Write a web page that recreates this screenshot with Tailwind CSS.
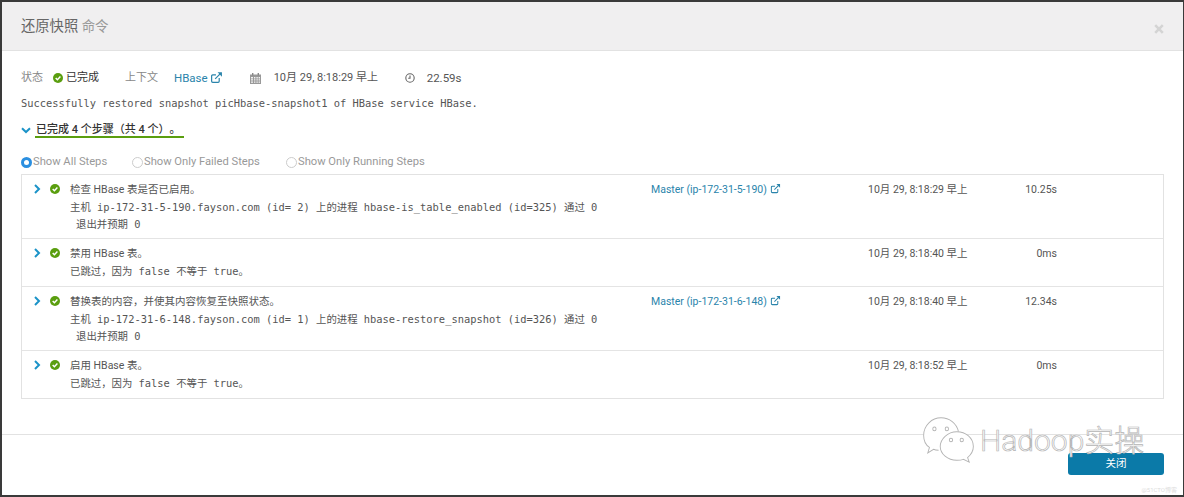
<!DOCTYPE html>
<html lang="zh">
<head>
<meta charset="utf-8">
<script src="https://cdn.jsdelivr.net/npm/@tailwindcss/browser@4"></script>
</head>
<body class="m-0 bg-[#3a3a3a]">
<div class="w-[1184px] h-[497px] overflow-hidden pt-[2px] pl-[2px] pr-px pb-[2px] font-['Roboto','Noto_Sans_CJK_SC',sans-serif] text-[#555]">
  <div class="relative flex flex-col h-full bg-white rounded-tl-[3px]">
    <header class="h-[49px] shrink-0 flex items-center justify-between bg-[#f0eff0] border-b border-[#e2e2e2] pl-[19px] pr-[19px]">
      <h1 class="text-[14.3px] leading-[20px] text-[#666] font-normal">还原快照 <span class="text-[13.4px] text-[#999]">命令</span></h1>
      <span class="text-[#d4d4d4]"><svg width="10" height="10" viewBox="0 0 10 10" class="block mt-[5px]"><path d="M1.2 1.2 8.8 8.8M8.8 1.2 1.2 8.8" stroke="currentColor" stroke-width="2.6"/></svg></span>
    </header>

    <main class="flex-1 pl-[19px] pr-[19px] flex flex-col">
      <div class="flex items-center h-[18px] mt-[18px] text-[11px] leading-[18px] whitespace-nowrap">
        <span class="w-[32px] text-[#888]">状态</span>
        <svg width="10" height="10" viewBox="0 0 10 10" class="shrink-0 mr-[3px]"><circle cx="5" cy="5" r="5" fill="#5a9e0f"/><path d="M2.7 5 4.4 6.7 7.4 3.6" fill="none" stroke="#fff" stroke-width="1.5"/></svg>
        <span class="w-[59px] text-[#333]">已完成</span>
        <span class="w-[49px] text-[#888]">上下文</span>
        <span class="text-[#2a84ab] text-[11.5px]">HBase</span>
        <svg width="13" height="13" viewBox="0 0 12 12" class="shrink-0 ml-[2px] mb-[2px]" fill="none" stroke="#2a84ab" stroke-width="1.1"><path d="M8.5 6.5v3a1 1 0 0 1-1 1h-5a1 1 0 0 1-1-1v-5a1 1 0 0 1 1-1h3"/><path d="M4.8 7.2 10 2"/><path d="M7 1.2h4v4" fill="#2a84ab" stroke="none"/></svg>
        <svg width="11" height="11" viewBox="0 0 11 11" class="shrink-0 ml-[27px] mr-[13px]"><path d="M0 1.5h11V11H0z" fill="#999"/><path d="M2 0h1.4v2.5H2zM7.6 0H9v2.5H7.6z" fill="#888"/><path d="M1 4h2v1.4H1zM4 4h1.4v1.4H4zM6.4 4h1.4v1.4H6.4zM8.6 4H10v1.4H8.6zM1 6.2h2v1.4H1zM4 6.2h1.4v1.4H4zM6.4 6.2h1.4v1.4H6.4zM8.6 6.2H10v1.4H8.6zM1 8.4h2v1.4H1zM4 8.4h1.4v1.4H4zM6.4 8.4h1.4v1.4H6.4zM8.6 8.4H10v1.4H8.6z" fill="#f4f4f4"/></svg>
        <span class="w-[126px]">10月 29, 8:18:29 早上</span>
        <svg width="10" height="10" viewBox="0 0 10 10" class="shrink-0 ml-[5px] mr-[12px]" fill="none" stroke="#666" stroke-width="1.1"><circle cx="5" cy="5" r="4.2"/><path d="M5 2.5V5.3H3.2"/></svg>
        <span class="text-[11.5px]">22.59s</span>
      </div>

      <p class="mt-[8px] h-[16px] font-['DejaVu_Sans_Mono','Noto_Sans_CJK_SC',monospace] text-[10.4px] leading-[16px] whitespace-nowrap">Successfully restored snapshot picHbase-snapshot1 of HBase service HBase.</p>

      <div class="flex items-start mt-[11px] h-[19px]">
        <svg width="10" height="7" viewBox="0 0 10 7" class="shrink-0 mt-[5px] mr-[5px]"><path d="M1 1.2 5 5 9 1.2" fill="none" stroke="#1b93c8" stroke-width="2"/></svg>
        <div class="w-[149px] -ml-px h-[16px] border-b-[2px] border-[#5a9e0f] text-[11px] leading-[16px] [text-spacing-trim:space-all] text-[#333] whitespace-nowrap font-medium pl-px">已完成 4 个步骤（共 4 个）。</div>
      </div>

      <div class="flex items-center mt-[13px] h-[16px] text-[11.2px] text-[#999] whitespace-nowrap">
        <span class="size-[11px] rounded-full bg-[#2b8fe0] border-[2px] border-[#2b8fe0] flex items-center justify-center shrink-0"><span class="size-[5px] rounded-full bg-white"></span></span>
        <span class="ml-px w-[99px]">Show All Steps</span>
        <span class="size-[11px] rounded-full border border-[#ccc] shrink-0"></span>
        <span class="ml-px w-[142px]">Show Only Failed Steps</span>
        <span class="size-[11px] rounded-full border border-[#ccc] shrink-0"></span>
        <span class="ml-px">Show Only Running Steps</span>
      </div>

      <section class="mt-[4px] w-[1143px] border border-[#e2e2e2] text-[10.5px]">
        <!-- row 1 -->
        <div class="h-[64px] flex border-b-[1px] border-[#e4e4e4]">
          <div class="w-[629px] shrink-0 flex">
            <svg width="8" height="10" viewBox="0 0 8 10" class="shrink-0 ml-[11px] mt-[9px]"><path d="M2 1 6 5 2 9" fill="none" stroke="#1b93c8" stroke-width="2"/></svg>
            <svg width="10" height="10" viewBox="0 0 10 10" class="shrink-0 ml-[9px] mt-[9px]"><circle cx="5" cy="5" r="5" fill="#5a9e0f"/><path d="M2.7 5 4.4 6.7 7.4 3.6" fill="none" stroke="#fff" stroke-width="1.5"/></svg>
            <div class="ml-[10px] whitespace-nowrap">
              <p class="mt-[7px] h-[16px] leading-[16px]">检查 HBase 表是否已启用。</p>
              <p class="mt-px h-[16px] leading-[16px] font-['DejaVu_Sans_Mono','Noto_Sans_CJK_SC',monospace] text-[10.4px] whitespace-pre">主机 ip-172-31-5-190.fayson.com (id= 2) 上的进程 hbase-is_table_enabled (id=325) 通过 0</p>
              <p class="mt-px h-[16px] leading-[16px] font-['DejaVu_Sans_Mono','Noto_Sans_CJK_SC',monospace] text-[10.4px] whitespace-pre pl-[6px]">退出并预期 0</p>
            </div>
          </div>
          <div class="w-[217px] shrink-0 flex items-start pt-[7px] leading-[16px] text-[#2a84ab] whitespace-nowrap">Master (ip-172-31-5-190)<svg width="11" height="11" viewBox="0 0 12 12" class="shrink-0 ml-[3px] mt-[1px]" fill="none" stroke="#2a84ab" stroke-width="1.1"><path d="M8.5 6.5v3a1 1 0 0 1-1 1h-5a1 1 0 0 1-1-1v-5a1 1 0 0 1 1-1h3"/><path d="M4.8 7.2 10 2"/><path d="M7 1.2h4v4" fill="#2a84ab" stroke="none"/></svg></div>
          <div class="w-[120px] shrink-0 pt-[7px] leading-[16px] whitespace-nowrap">10月 29, 8:18:29 早上</div>
          <div class="w-[69px] shrink-0 pt-[7px] leading-[16px] text-right">10.25s</div>
        </div>
        <!-- row 2 -->
        <div class="h-[48px] flex border-b-[1px] border-[#e4e4e4]">
          <div class="w-[629px] shrink-0 flex">
            <svg width="8" height="10" viewBox="0 0 8 10" class="shrink-0 ml-[11px] mt-[9px]"><path d="M2 1 6 5 2 9" fill="none" stroke="#1b93c8" stroke-width="2"/></svg>
            <svg width="10" height="10" viewBox="0 0 10 10" class="shrink-0 ml-[9px] mt-[9px]"><circle cx="5" cy="5" r="5" fill="#5a9e0f"/><path d="M2.7 5 4.4 6.7 7.4 3.6" fill="none" stroke="#fff" stroke-width="1.5"/></svg>
            <div class="ml-[10px] whitespace-nowrap">
              <p class="mt-[7px] h-[16px] leading-[16px]">禁用 HBase 表。</p>
              <p class="mt-px h-[16px] leading-[16px] font-['DejaVu_Sans_Mono','Noto_Sans_CJK_SC',monospace] text-[10.4px] whitespace-pre">已跳过，因为 false 不等于 true。</p>
            </div>
          </div>
          <div class="w-[217px] shrink-0"></div>
          <div class="w-[120px] shrink-0 pt-[7px] leading-[16px] whitespace-nowrap">10月 29, 8:18:40 早上</div>
          <div class="w-[69px] shrink-0 pt-[7px] leading-[16px] text-right">0ms</div>
        </div>
        <!-- row 3 -->
        <div class="h-[64px] flex border-b-[1px] border-[#e4e4e4]">
          <div class="w-[629px] shrink-0 flex">
            <svg width="8" height="10" viewBox="0 0 8 10" class="shrink-0 ml-[11px] mt-[9px]"><path d="M2 1 6 5 2 9" fill="none" stroke="#1b93c8" stroke-width="2"/></svg>
            <svg width="10" height="10" viewBox="0 0 10 10" class="shrink-0 ml-[9px] mt-[9px]"><circle cx="5" cy="5" r="5" fill="#5a9e0f"/><path d="M2.7 5 4.4 6.7 7.4 3.6" fill="none" stroke="#fff" stroke-width="1.5"/></svg>
            <div class="ml-[10px] whitespace-nowrap">
              <p class="mt-[7px] h-[16px] leading-[16px]">替换表的内容，并使其内容恢复至快照状态。</p>
              <p class="mt-px h-[16px] leading-[16px] font-['DejaVu_Sans_Mono','Noto_Sans_CJK_SC',monospace] text-[10.4px] whitespace-pre">主机 ip-172-31-6-148.fayson.com (id= 1) 上的进程 hbase-restore_snapshot (id=326) 通过 0</p>
              <p class="mt-px h-[16px] leading-[16px] font-['DejaVu_Sans_Mono','Noto_Sans_CJK_SC',monospace] text-[10.4px] whitespace-pre pl-[6px]">退出并预期 0</p>
            </div>
          </div>
          <div class="w-[217px] shrink-0 flex items-start pt-[7px] leading-[16px] text-[#2a84ab] whitespace-nowrap">Master (ip-172-31-6-148)<svg width="11" height="11" viewBox="0 0 12 12" class="shrink-0 ml-[3px] mt-[1px]" fill="none" stroke="#2a84ab" stroke-width="1.1"><path d="M8.5 6.5v3a1 1 0 0 1-1 1h-5a1 1 0 0 1-1-1v-5a1 1 0 0 1 1-1h3"/><path d="M4.8 7.2 10 2"/><path d="M7 1.2h4v4" fill="#2a84ab" stroke="none"/></svg></div>
          <div class="w-[120px] shrink-0 pt-[7px] leading-[16px] whitespace-nowrap">10月 29, 8:18:40 早上</div>
          <div class="w-[69px] shrink-0 pt-[7px] leading-[16px] text-right">12.34s</div>
        </div>
        <!-- row 4 -->
        <div class="h-[47px] flex">
          <div class="w-[629px] shrink-0 flex">
            <svg width="8" height="10" viewBox="0 0 8 10" class="shrink-0 ml-[11px] mt-[9px]"><path d="M2 1 6 5 2 9" fill="none" stroke="#1b93c8" stroke-width="2"/></svg>
            <svg width="10" height="10" viewBox="0 0 10 10" class="shrink-0 ml-[9px] mt-[9px]"><circle cx="5" cy="5" r="5" fill="#5a9e0f"/><path d="M2.7 5 4.4 6.7 7.4 3.6" fill="none" stroke="#fff" stroke-width="1.5"/></svg>
            <div class="ml-[10px] whitespace-nowrap">
              <p class="mt-[7px] h-[16px] leading-[16px]">启用 HBase 表。</p>
              <p class="mt-px h-[16px] leading-[16px] font-['DejaVu_Sans_Mono','Noto_Sans_CJK_SC',monospace] text-[10.4px] whitespace-pre">已跳过，因为 false 不等于 true。</p>
            </div>
          </div>
          <div class="w-[217px] shrink-0"></div>
          <div class="w-[120px] shrink-0 pt-[7px] leading-[16px] whitespace-nowrap">10月 29, 8:18:52 早上</div>
          <div class="w-[69px] shrink-0 pt-[7px] leading-[16px] text-right">0ms</div>
        </div>
      </section>
    </main>

    <footer class="h-[61px] shrink-0 border-t border-[#e2e2e2] flex justify-end items-start pr-[19px] pt-[18px]">
      <button class="w-[96px] h-[22px] rounded-[3px] bg-[#0b7aa8] text-white text-[10.5px] leading-[22px] text-center">关闭</button>
    </footer>

    <!-- watermark overlay -->
    <div class="absolute left-[920px] top-[414px] flex items-start pointer-events-none">
      <svg width="53" height="48" viewBox="0 0 64 52" preserveAspectRatio="none" fill="none" stroke="#b4b4b4" stroke-width="1.1">
        <path d="M20 37c-2 0-4 0-6-1l-7 4 2-6C4 31 2 26 2 21 2 10 12 2 23 2c10 0 19 6 21 15" fill="#fff"/>
        <circle cx="15" cy="14" r="2"/><circle cx="30" cy="14" r="2"/>
        <path d="M42 17c11 0 20 7 20 16 0 5-3 9-7 12l2 5-7-3c-3 1-5 1-8 1-11 0-20-7-20-15s9-16 20-16z" fill="#fff"/>
        <circle cx="35" cy="26" r="2"/><circle cx="48" cy="26" r="2"/>
      </svg>
      <span class="ml-[5px] mt-[7px] text-[30px] leading-[36px] font-light text-white [-webkit-text-stroke:0.7px_#b4b4b4] whitespace-nowrap">Hadoop实操</span>
    </div>
    <span class="absolute right-[6px] bottom-[1px] text-[6px] leading-[8px] text-[#ddd] pointer-events-none">@51CTO博客</span>
  </div>
</div>
</body>
</html>
